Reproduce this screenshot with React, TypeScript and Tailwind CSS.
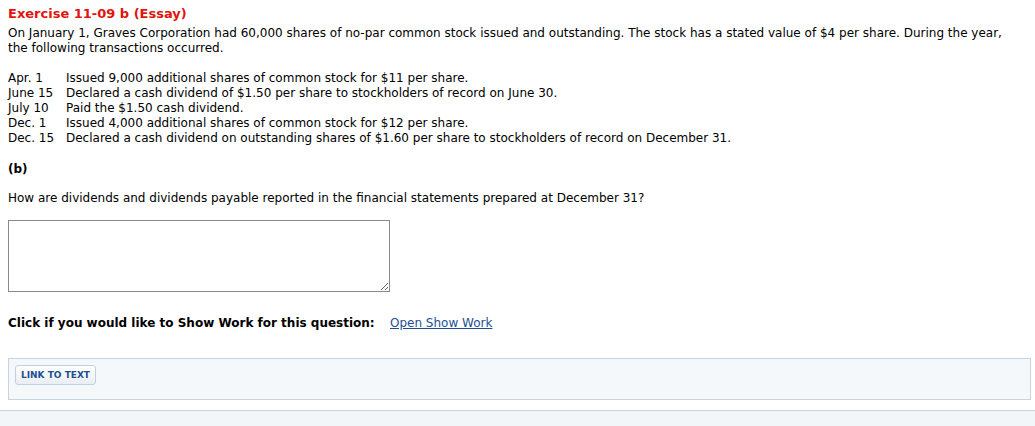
export default function App() {
    const rows = [
        ['Apr. 1', 'Issued 9,000 additional shares of common stock for $11 per share.'],
        ['June 15', 'Declared a cash dividend of $1.50 per share to stockholders of record on June 30.'],
        ['July 10', 'Paid the $1.50 cash dividend.'],
        ['Dec. 1', 'Issued 4,000 additional shares of common stock for $12 per share.'],
        ['Dec. 15', 'Declared a cash dividend on outstanding shares of $1.60 per share to stockholders of record on December 31.'],
    ];

    return (
        <div className="w-[1035px] h-[426px] overflow-hidden bg-white text-[12px] leading-[15px] text-black font-['DejaVu_Sans',Verdana,sans-serif]">
            <div className="px-2 pt-[6px]">
                <h1 className="text-[13px] leading-[16px] font-bold text-[#e2140c]">Exercise 11-09 b (Essay)</h1>
                <p className="mt-[4px] max-w-[1012px]">
                    On January 1, Graves Corporation had 60,000 shares of no-par common stock issued and outstanding. The stock has a stated value of $4 per share. During the year, the following transactions occurred.
                </p>

                <div className="mt-[15px]">
                    {rows.map(([d, t]) => (
                        <div key={d} className="flex">
                            <span className="w-[58px] shrink-0">{d}</span>
                            <span>{t}</span>
                        </div>
                    ))}
                </div>

                <p className="mt-[16px] font-bold">(b)</p>

                <p className="mt-[14px]">
                    How are dividends and dividends payable reported in the financial statements prepared at December 31?
                </p>

                <textarea className="mt-[14px] block w-[382px] h-[72px] border border-[#8a8a8a] resize" />

                <div className="mt-[24px] flex">
                    <span className="font-bold w-[382px]">Click if you would like to Show Work for this question:</span>
                    <a href="#" className="text-[#1f4e96] underline">Open Show Work</a>
                </div>
            </div>

            <div className="ml-2 mr-1 mt-[27px] h-[42px] border border-[#c9d3e0] bg-[#f5f8fb] px-[6px] pt-[6px]">
                <button className="h-[20px] px-[5px] rounded-[3px] border border-[#c5d0dc] bg-gradient-to-b from-white to-[#e9eef5] text-[9px] font-bold text-[#1d4f91] font-['DejaVu_Sans',Verdana,sans-serif]">
                    LINK TO TEXT
                </button>
            </div>

            <div className="mt-[10px] h-[20px] border-t border-[#c9d3e0] bg-[#f3f6f9]" />
        </div>
    );
}
